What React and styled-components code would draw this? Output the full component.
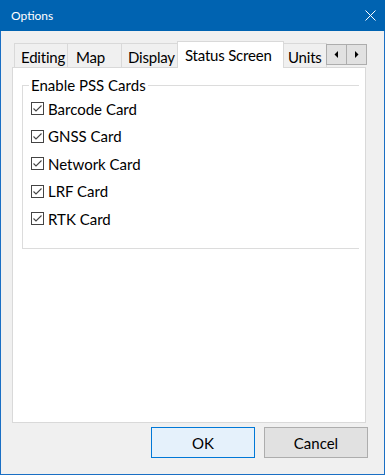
import React from 'react';
import styled, { createGlobalStyle } from 'styled-components';

const GlobalStyle = createGlobalStyle`
  html, body {
    margin: 0;
    padding: 0;
    background: #ffffff;
  }
  body {
    font-family: Lato, "Liberation Sans", sans-serif;
  }
`;

const Window = styled.div`
  box-sizing: border-box;
  width: 385px;
  height: 475px;
  border: 1px solid #1a6fc4;
  border-top: none;
  background: #f0f0f0;
  display: flex;
  flex-direction: column;
`;

const TitleBar = styled.div`
  height: 31px;
  margin: 0 -1px;
  background: #0063b1;
  display: flex;
  align-items: center;
  justify-content: space-between;
  padding: 0 9px 0 11px;
  color: #fff;
  font-size: 12px;
`;

const CloseButton = styled.div`
  width: 12px;
  height: 12px;
  display: flex;
  align-items: center;
  justify-content: center;
`;

const Body = styled.div`
  flex: 1;
  display: flex;
  flex-direction: column;
  padding: 10px 16px 16px 11px;
`;

const TabStrip = styled.div`
  height: 26px;
  display: flex;
  align-items: flex-end;
  padding-left: 2px;
`;

const Tab = styled.div`
  box-sizing: border-box;
  width: ${(p) => p.width}px;
  height: ${(p) => (p.active ? 27 : 24)}px;
  margin-left: -1px;
  margin-bottom: ${(p) => (p.active ? -1 : 0)}px;
  border: 1px solid #d9d9d9;
  border-bottom: none;
  background: ${(p) => (p.active ? '#ffffff' : '#f0f0f0')};
  position: relative;
  z-index: ${(p) => (p.active ? 1 : 0)};
  display: flex;
  align-items: center;
  padding-left: ${(p) => p.pad}px;
  padding-top: ${(p) => (p.active ? 0 : 2)}px;
  font-size: 15px;
  letter-spacing: -0.2px;
  color: #000;
  white-space: nowrap;
  overflow: hidden;
  &:first-child {
    margin-left: 0;
  }
`;

const Scroller = styled.div`
  display: flex;
  align-self: flex-start;
  margin-top: 3px;
  margin-left: -1px;
  position: relative;
  z-index: 2;
`;

const ScrollButton = styled.div`
  box-sizing: border-box;
  width: 21px;
  height: 21px;
  border: 1px solid #adadad;
  background: #e1e1e1;
  display: flex;
  align-items: center;
  justify-content: center;
  & + & {
    margin-left: -1px;
  }
`;

const Panel = styled.div`
  box-sizing: border-box;
  width: 354px;
  height: 356px;
  border: 1px solid #d9d9d9;
  background: #ffffff;
  padding: 9px 0 0 9px;
  display: flex;
  flex-direction: column;
`;

const GroupBox = styled.fieldset`
  box-sizing: border-box;
  width: 337px;
  margin: 0;
  border: 1px solid #dcdcdc;
  border-right: none;
  padding: 1px 0 15px 0;
  display: flex;
  flex-direction: column;
`;

const Legend = styled.legend`
  font-size: 15px;
  color: #000;
  padding: 0 2px;
  margin-left: 6px;
  line-height: 17px;
`;

const CheckRow = styled.label`
  height: 27.5px;
  display: flex;
  align-items: center;
  gap: 4px;
  padding-left: 8px;
  font-size: 15px;
  color: #000;
`;

const ButtonRow = styled.div`
  display: flex;
  justify-content: flex-end;
  gap: 9px;
  margin-top: 4px;
`;

const Button = styled.div`
  box-sizing: border-box;
  width: 104px;
  height: 31px;
  border: 1px solid ${(p) => (p.primary ? '#0078d7' : '#adadad')};
  background: ${(p) => (p.primary ? '#e5f1fb' : '#e1e1e1')};
  display: flex;
  align-items: center;
  justify-content: center;
  font-size: 15px;
  color: #000;
`;

const CheckBox = () => (
  <svg width="13" height="13" viewBox="0 0 13 13">
    <rect x="0.5" y="0.5" width="12" height="12" fill="#fff" stroke="#444" />
    <polyline points="2.5,6.5 5,9 10.5,3.5" fill="none" stroke="#444" strokeWidth="1.1" />
  </svg>
);

const Arrow = ({ dir }) => (
  <svg width="5" height="7" viewBox="0 0 5 7">
    {dir === 'left'
      ? <polygon points="4,0 4,7 0.5,3.5" fill="#000" />
      : <polygon points="1,0 1,7 4.5,3.5" fill="#000" />}
  </svg>
);

const tabs = [
  { label: 'Editing', width: 54, pad: 6 },
  { label: 'Map', width: 55, pad: 8 },
  { label: 'Display', width: 57, pad: 6 },
  { label: 'Status Screen', width: 107, pad: 7, active: true },
  { label: 'Units', width: 44, pad: 4 },
];

const cards = ['Barcode Card', 'GNSS Card', 'Network Card', 'LRF Card', 'RTK Card'];

const App = () => (
  <>
    <GlobalStyle />
    <Window>
      <TitleBar>
        <span>Options</span>
        <CloseButton>
          <svg width="11" height="11" viewBox="0 0 11 11">
            <path d="M0.5 0.5 L10.5 10.5 M10.5 0.5 L0.5 10.5" stroke="#fff" strokeWidth="1" />
          </svg>
        </CloseButton>
      </TitleBar>
      <Body>
        <TabStrip>
          {tabs.map((t) => (
            <Tab key={t.label} width={t.width} pad={t.pad} active={t.active}>
              {t.label}
            </Tab>
          ))}
          <Scroller>
            <ScrollButton><Arrow dir="left" /></ScrollButton>
            <ScrollButton><Arrow dir="right" /></ScrollButton>
          </Scroller>
        </TabStrip>
        <Panel>
          <GroupBox>
            <Legend>Enable PSS Cards</Legend>
            {cards.map((c) => (
              <CheckRow key={c}>
                <CheckBox />
                {c}
              </CheckRow>
            ))}
          </GroupBox>
        </Panel>
        <ButtonRow>
          <Button primary>OK</Button>
          <Button>Cancel</Button>
        </ButtonRow>
      </Body>
    </Window>
  </>
);

export default App;
